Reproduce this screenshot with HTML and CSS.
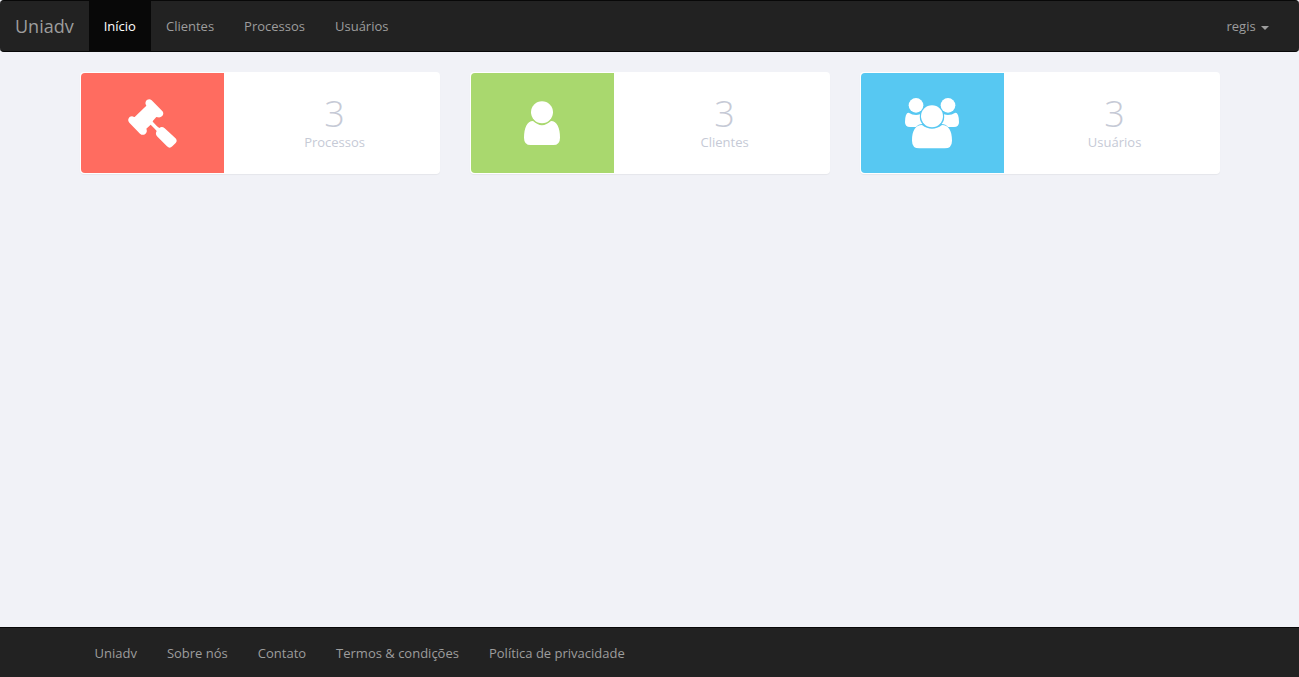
FILE: index.html
```html
<!DOCTYPE html>
<html lang="pt-BR">
<head>
  <meta charset="utf-8">
  <meta name="viewport" content="width=device-width, initial-scale=1">
  <title>Uniadv</title>
  <link rel="stylesheet" href="styles.css">
</head>
<body>
  <header class="navbar">
    <a class="brand" href="#">Uniadv</a>
    <nav class="nav">
      <a class="nav-link active" href="#" aria-current="page">Início</a>
      <a class="nav-link" href="#">Clientes</a>
      <a class="nav-link" href="#">Processos</a>
      <a class="nav-link" href="#">Usuários</a>
    </nav>
    <button class="nav-link user-menu" type="button" aria-haspopup="true">regis <span class="caret"></span></button>
  </header>

  <main class="container cards">
    <a class="card" href="#">
      <span class="card-icon red">
        <svg viewBox="0 0 183 180" fill="#fff" aria-hidden="true">
          <path d="M72 36C66 25 79 13 89 22L120 53C130 62 119 76 107 73L103 72L93 83Q91 85 93 87L105 100L112 105Q120 99 128 106L159 134Q168 142 161 150L151 160Q143 168 135 160L105 130Q99 123 104 114L98 107L86 95L73 107L74 110C77 121 64 131 54 122L22 89C13 79 25 65 36 72L38 72L73 38Z"/>
        </svg>
      </span>
      <span class="card-body">
        <span class="count">3</span>
        <span class="label">Processos</span>
      </span>
    </a>
    <a class="card" href="#">
      <span class="card-icon green">
        <svg viewBox="0 0 183 180" fill="#fff" aria-hidden="true">
          <circle cx="90" cy="58" r="33"/>
          <path d="M63 84Q90 109 117 84C135 84 144 105 144 134Q144 156 124 156H56Q36 156 36 134C36 105 45 84 63 84Z"/>
        </svg>
      </span>
      <span class="card-body">
        <span class="count">3</span>
        <span class="label">Clientes</span>
      </span>
    </a>
    <a class="card" href="#">
      <span class="card-icon blue">
        <svg viewBox="0 0 183 180" fill="#fff" aria-hidden="true">
          <circle cx="42" cy="37" r="22"/>
          <circle cx="138" cy="37" r="22"/>
          <circle cx="90" cy="70" r="33"/>
          <path d="M20 59Q36 69 54 64Q51 82 61 93Q49 93 42 102H24Q9 102 9 88Q9 59 20 59Z"/>
          <path d="M160 59Q144 69 126 64Q129 82 119 93Q131 93 138 102H156Q171 102 171 88Q171 59 160 59Z"/>
          <path d="M60 96Q90 119 120 96C139 96 150 112 150 143Q150 166 128 166H52Q30 166 30 143C30 112 41 96 60 96Z"/>
        </svg>
      </span>
      <span class="card-body">
        <span class="count">3</span>
        <span class="label">Usuários</span>
      </span>
    </a>
  </main>

  <footer class="footer">
    <nav class="container nav">
      <a class="nav-link" href="#">Uniadv</a>
      <a class="nav-link" href="#">Sobre nós</a>
      <a class="nav-link" href="#">Contato</a>
      <a class="nav-link" href="#">Termos &amp; condições</a>
      <a class="nav-link" href="#">Política de privacidade</a>
    </nav>
  </footer>
</body>
</html>
```

FILE: styles.css
```css
* {
  box-sizing: border-box;
}

body {
  display: flex;
  flex-direction: column;
  min-height: 100vh;
  margin: 0;
  background: #f1f2f7;
  color: #c6cad6;
  font: 13px/20px "Open Sans", sans-serif;
}

a {
  color: inherit;
  text-decoration: none;
}

.container {
  width: 100%;
  max-width: 1140px;
  margin: 0 auto;
}

.navbar {
  display: flex;
  padding-right: 15px;
  border: solid #080808;
  border-width: 1px 0;
  border-radius: 4px;
  background: #222;
}

.brand {
  padding: 15px;
  color: #9d9d9d;
  font-size: 18px;
}

.nav {
  display: flex;
  flex-wrap: wrap;
}

.nav-link {
  padding: 15px;
  color: #9d9d9d;
}

.nav-link:hover {
  color: #fff;
}

.nav-link.active {
  background: #080808;
  color: #fff;
}

.user-menu {
  margin-left: auto;
  border: 0;
  background: none;
  font: inherit;
  cursor: pointer;
}

.caret {
  display: inline-block;
  margin-left: 2px;
  border: 4px solid transparent;
  border-top-color: currentColor;
  border-bottom: 0;
  vertical-align: middle;
}

.cards {
  display: grid;
  grid-template-columns: repeat(auto-fit, minmax(280px, 1fr));
  gap: 30px;
  padding: 20px 0;
}

.card {
  display: flex;
  padding: 1px;
  border-radius: 4px;
  background: #fff;
  box-shadow: 0 1px 1px rgba(0, 0, 0, 0.05);
}

.card-icon {
  display: flex;
  flex: 0 0 40%;
  align-items: center;
  justify-content: center;
  padding: 20px 0;
  border-radius: 4px 0 0 4px;
}

.card-icon svg {
  width: 61px;
  height: 60px;
}

.red {
  background: #ff6c60;
}

.green {
  background: #a9d86e;
}

.blue {
  background: #57c8f2;
}

.card-body {
  display: flex;
  flex: 1;
  flex-direction: column;
  align-items: center;
  justify-content: center;
  padding: 2px 0 0 7px;
}

.count {
  font-size: 36px;
  font-weight: 300;
  line-height: 36px;
}

.footer {
  margin-top: auto;
  border-top: 1px solid #080808;
  background: #222;
}

.footer .nav-link {
  padding-bottom: 14px;
}
```
